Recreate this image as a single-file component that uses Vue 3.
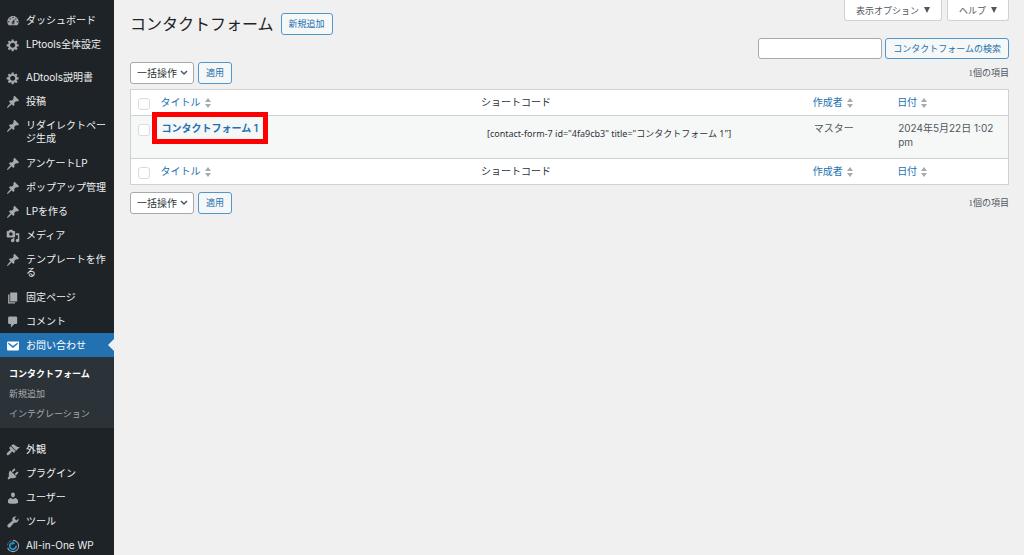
<script setup>
import { ref } from 'vue'

const icons = {
  dashboard: 'M3.76 16h12.48c1.1-1.37 1.76-3.11 1.76-5 0-4.42-3.58-8-8-8s-8 3.58-8 8c0 1.89.66 3.63 1.76 5zM10 4c.55 0 1 .45 1 1s-.45 1-1 1-1-.45-1-1 .45-1 1-1zM6 6c.55 0 1 .45 1 1s-.45 1-1 1-1-.45-1-1 .45-1 1-1zm8 0c.55 0 1 .45 1 1s-.45 1-1 1-1-.45-1-1 .45-1 1-1zm-5.37 5.55L12 7v6c0 1.1-.9 2-2 2s-2-.9-2-2c0-.57.24-1.08.63-1.45zM4 10c.55 0 1 .45 1 1s-.45 1-1 1-1-.45-1-1 .45-1 1-1zm12 0c.55 0 1 .45 1 1s-.45 1-1 1-1-.45-1-1 .45-1 1-1zm-5 3c0-.55-.45-1-1-1s-1 .45-1 1 .45 1 1 1 1-.45 1-1z',
  gear: 'M18 12h-2.18c-.17.7-.44 1.35-.81 1.93l1.54 1.54-2.1 2.1-1.54-1.54c-.58.36-1.23.63-1.91.79V19H8v-2.18c-.68-.16-1.33-.43-1.91-.79l-1.54 1.54-2.12-2.12 1.54-1.54c-.36-.58-.63-1.23-.79-1.91H1V9.03h2.17c.16-.7.44-1.35.8-1.94L2.43 5.55l2.1-2.1 1.54 1.54c.58-.37 1.24-.64 1.93-.81V2h3v2.18c.68.16 1.33.43 1.91.79l1.54-1.54 2.12 2.12-1.54 1.54c.36.59.64 1.24.8 1.94H18V12zm-8.5 2.1c2 0 3.6-1.6 3.6-3.6s-1.6-3.6-3.6-3.6-3.600 1.6-3.600 3.600 1.600 3.600 3.600 3.600z',
  pin: 'M10.44 3.02l1.82-1.82 6.36 6.35-1.83 1.82c-1.05-.68-2.48-.57-3.41.36l-.75.75c-.92.93-1.04 2.35-.35 3.41l-1.83 1.82-2.41-2.41-2.8 2.79c-.42.42-3.38 2.71-3.8 2.29s1.86-3.39 2.28-3.81l2.79-2.79L4.1 9.36l1.83-1.82c1.05.69 2.48.57 3.4-.36l.75-.75c.93-.92 1.05-2.35.36-3.41z',
  media: 'M13 11V4c0-.55-.45-1-1-1h-1.67L9 1H5L3.67 3H2c-.55 0-1 .45-1 1v7c0 .55.45 1 1 1h10c.55 0 1-.45 1-1zM7 4.5c1.38 0 2.5 1.12 2.5 2.5S8.38 9.5 7 9.5 4.5 8.38 4.5 7 5.62 4.5 7 4.5zM14 6h5v10.5c0 1.38-1.12 2.5-2.5 2.5S14 17.88 14 16.5s1.12-2.5 2.5-2.5c.17 0 .34.02.5.05V9h-3V6zm-4 8.05V13h2v3.5c0 1.38-1.12 2.5-2.5 2.5S7 17.88 7 16.5 8.12 14 9.5 14c.17 0 .34.02.5.05z',
  page: 'M6 15V2h10v13H6zm-1 1h8v2H3V5h2v11z',
  comment: 'M5 2h9c1.1 0 2 .9 2 2v7c0 1.1-.9 2-2 2h-2l-5 5v-5H5c-1.1 0-2-.9-2-2V4c0-1.1.9-2 2-2z',
  mail: 'M3.5 3.5h13A1.5 1.5 0 0 1 18.5 5v10a1.5 1.5 0 0 1-1.5 1.5H3A1.500 1.500 0 0 1 1.500 15V5A1.500 1.500 0 0 1 3 3.500zM3.800 5.400L2.800 6.700l7.200 6.300 7.200-6.300-1-1.300L10 9.900z',
  brush: 'M14.48 11.06L7.41 3.99l1.5-1.5c.5-.56 2.3-.47 3.51.32 1.21.8 1.43 1.28 2.91 2.1 1.18.64 2.45 1.26 4.45.85zm-.71.71L6.7 4.7 4.93 6.47c-.39.39-.39 1.02 0 1.41l1.06 1.06c.39.39.39 1.03 0 1.42-.6.6-1.43 1.11-2.21 1.69-.35.26-.7.53-1.01.84C1.43 14.23.4 16.08 1.4 17.07c.99 1 2.84-.03 4.18-1.36.31-.31.58-.66.85-1.02.57-.78 1.08-1.61 1.69-2.21.39-.39 1.02-.39 1.41 0l1.06 1.06c.39.39 1.02.39 1.41 0z',
  plug: 'M13.11 4.36L9.87 7.6 8 5.73l3.24-3.24c.35-.34 1.05-.2 1.56.32.52.51.66 1.21.31 1.55zm-8 1.77l.91-1.12 9.01 9.01-1.19.84c-.71.71-2.63 1.16-3.82 1.16H6.14L4.9 17.26c-.59.59-1.54.59-2.12 0-.59-.58-.59-1.53 0-2.12l1.24-1.24v-3.88c0-1.13.4-3.19 1.09-3.89zm7.26 3.97l3.24-3.24c.34-.35 1.04-.21 1.55.31.52.51.66 1.21.31 1.55l-3.24 3.25z',
  user: 'M10 9.25c-2.27 0-2.73-3.44-2.73-3.44C7 4.02 7.82 2 9.97 2c2.16 0 2.98 2.02 2.71 3.81 0 0-.41 3.44-2.68 3.44zm0 2.57L12.72 10c2.39 0 4.52 2.33 4.52 4.53v2.49s-3.65 1.13-7.24 1.13c-3.65 0-7.24-1.13-7.24-1.13v-2.49c0-2.25 1.94-4.48 4.47-4.48z',
  wrench: 'M16.68 9.77c-1.34 1.34-3.3 1.67-4.95.99l-5.41 6.52c-.99.99-2.59.99-3.58 0s-.99-2.59 0-3.57l6.52-5.42c-.68-1.65-.35-3.61.99-4.95 1.28-1.28 3.12-1.62 4.72-1.06l-2.89 2.89 2.82 2.82 2.86-2.87c.53 1.58.18 3.39-1.08 4.65z',
}

const groups = [
  [
    { icon: 'dashboard', label: 'ダッシュボード' },
    { icon: 'gear', label: 'LPtools全体設定' },
  ],
  [
    { icon: 'gear', label: 'ADtools説明書' },
    { icon: 'pin', label: '投稿' },
    { icon: 'pin', label: 'リダイレクトページ生成', wrapped: true },
    { icon: 'pin', label: 'アンケートLP' },
    { icon: 'pin', label: 'ポップアップ管理' },
    { icon: 'pin', label: 'LPを作る' },
    { icon: 'media', label: 'メディア' },
    { icon: 'pin', label: 'テンプレートを作る', wrapped: true },
    { icon: 'page', label: '固定ページ' },
    { icon: 'comment', label: 'コメント' },
    {
      icon: 'mail',
      label: 'お問い合わせ',
      current: true,
      children: ['コンタクトフォーム', '新規追加', 'インテグレーション'],
    },
  ],
  [
    { icon: 'brush', label: '外観' },
    { icon: 'plug', label: 'プラグイン' },
    { icon: 'user', label: 'ユーザー' },
    { icon: 'wrench', label: 'ツール' },
    { icon: 'migration', label: 'All-in-One WP' },
  ],
]

const columns = [
  { key: 'title', label: 'タイトル', sortable: true },
  { key: 'shortcode', label: 'ショートコード', sortable: false },
  { key: 'author', label: '作成者', sortable: true },
  { key: 'date', label: '日付', sortable: true },
]

const search = ref('')
const shortcode = '[contact-form-7 id="4fa9cb3" title="コンタクトフォーム 1"]'
</script>

<template>
  <div class="admin">
    <nav class="sidebar" aria-label="メインメニュー">
      <ul v-for="(group, g) in groups" :key="g" class="menu">
        <li v-for="item in group" :key="item.label" :class="{ wrapped: item.wrapped, current: item.current }">
          <a href="#" class="menu-link">
            <svg v-if="item.icon === 'migration'" class="icon" viewBox="0 0 20 20" aria-hidden="true">
              <path d="M10 2a8 8 0 1 1-7.6 10.5" fill="none" stroke="#a7aaad" stroke-width="1.6" />
              <path d="M2.2 9A8 8 0 0 1 7.5 2.4" fill="none" stroke="#8c8f94" stroke-width="1.4" stroke-dasharray="1.5 1" />
              <path d="M14.3 9.5a4.5 4.5 0 1 1-4.8-3.8" fill="none" stroke="#1d94d2" stroke-width="2.6" />
              <path d="M9 2.8l4.2 3.1L9 8.6z" fill="#1d94d2" />
            </svg>
            <svg v-else class="icon" viewBox="0 0 20 20" aria-hidden="true">
              <path :d="icons[item.icon]" fill="currentColor" fill-rule="evenodd" />
            </svg>
            <span class="menu-label">{{ item.label }}</span>
          </a>
          <ul v-if="item.children" class="submenu">
            <li v-for="(child, c) in item.children" :key="child">
              <a href="#" :class="{ active: c === 0 }">{{ child }}</a>
            </li>
          </ul>
        </li>
      </ul>
    </nav>

    <main class="content">
      <header class="top">
        <div class="heading">
          <h1>コンタクトフォーム</h1>
          <a href="#" class="button">新規追加</a>
        </div>
        <div class="screen-tabs">
          <button type="button">表示オプション<svg viewBox="0 0 6 6" aria-hidden="true"><path d="M0 0h6L3 6z" /></svg></button>
          <button type="button">ヘルプ<svg viewBox="0 0 6 6" aria-hidden="true"><path d="M0 0h6L3 6z" /></svg></button>
        </div>
      </header>

      <form class="search" @submit.prevent>
        <input v-model="search" type="search" aria-label="コンタクトフォームの検索" />
        <button type="submit" class="button">コンタクトフォームの検索</button>
      </form>

      <div class="tablenav">
        <div class="bulk">
          <select aria-label="一括操作を選択"><option>一括操作</option></select>
          <button type="button" class="button">適用</button>
        </div>
        <span class="count">1個の項目</span>
      </div>

      <table>
        <colgroup>
          <col class="col-check" />
          <col class="col-title" />
          <col class="col-shortcode" />
          <col class="col-author" />
          <col class="col-date" />
        </colgroup>
        <thead>
          <tr>
            <td class="check"><input type="checkbox" aria-label="すべて選択" /></td>
            <th v-for="col in columns" :key="col.key" scope="col">
              <a v-if="col.sortable" href="#">{{ col.label }}<svg class="sort" viewBox="0 0 6 10" aria-hidden="true"><path d="M0 4l3-4 3 4zM0 6h6l-3 4z" /></svg></a>
              <template v-else>{{ col.label }}</template>
            </th>
          </tr>
        </thead>
        <tbody>
          <tr>
            <td class="check"><input type="checkbox" aria-label="コンタクトフォーム 1 を選択" /></td>
            <td><a href="#" class="row-title">コンタクトフォーム 1</a></td>
            <td><input class="shortcode" type="text" readonly :value="shortcode" aria-label="ショートコード" /></td>
            <td>マスター</td>
            <td>2024年5月22日 1:02 pm</td>
          </tr>
        </tbody>
        <tfoot>
          <tr>
            <td class="check"><input type="checkbox" aria-label="すべて選択" /></td>
            <th v-for="col in columns" :key="col.key" scope="col">
              <a v-if="col.sortable" href="#">{{ col.label }}<svg class="sort" viewBox="0 0 6 10" aria-hidden="true"><path d="M0 4l3-4 3 4zM0 6h6l-3 4z" /></svg></a>
              <template v-else>{{ col.label }}</template>
            </th>
          </tr>
        </tfoot>
      </table>

      <div class="tablenav bottom">
        <div class="bulk">
          <select aria-label="一括操作を選択"><option>一括操作</option></select>
          <button type="button" class="button">適用</button>
        </div>
        <span class="count">1個の項目</span>
      </div>
    </main>
  </div>
</template>

<style>
body {
  background: #f0f0f1;
}
</style>

<style scoped>
* {
  box-sizing: border-box;
}
.admin {
  display: flex;
  height: 100vh;
  overflow: hidden;
  font-family: Inter, "Noto Sans CJK JP", sans-serif;
  font-size: 10px;
  line-height: 13px;
  color: #50575e;
  background: #f0f0f1;
}
a {
  color: #2271b1;
  text-decoration: none;
}
ul {
  list-style: none;
  margin: 0;
  padding: 0;
}

.sidebar {
  flex: 0 0 114px;
  background: #1d2327;
  padding-top: 8px;
}
.menu + .menu {
  margin-top: 9px;
}
.menu-link {
  position: relative;
  display: flex;
  gap: 6px;
  padding: 6px 8px 5px 6px;
  color: #f0f0f1;
}
.icon {
  flex: none;
  width: 14px;
  height: 14px;
  color: #a7aaad;
}
.menu-link .icon {
  margin-bottom: -1px;
}
.menu-label {
  flex: 1;
  min-width: 0;
  word-break: break-all;
}
.wrapped .menu-link {
  padding-bottom: 6px;
}
.current > .menu-link {
  background: #2271b1;
  color: #fff;
}
.current .icon {
  color: #fff;
}
.current > .menu-link::after {
  content: "";
  position: absolute;
  right: 0;
  top: 6px;
  border: 6px solid transparent;
  border-right-color: #f0f0f1;
  border-left: 0;
}
.submenu {
  background: #2c3338;
  padding: 7px 0 4px;
}
.submenu a {
  display: block;
  padding: 3px 8px 4px 9px;
  color: #a7aaad;
  font-size: 9px;
}
.submenu a.active {
  color: #fff;
  font-weight: 600;
}

.content {
  flex: 1;
  min-width: 0;
  padding: 0 15px 0 16px;
}
.top {
  display: flex;
  justify-content: space-between;
  align-items: flex-start;
}
.heading {
  display: flex;
  align-items: center;
  gap: 7px;
  padding: 13px 0 3px;
}
h1 {
  margin: 0;
  font-size: 16px;
  font-weight: 400;
  line-height: 22px;
  color: #1d2327;
}
.button {
  display: inline-block;
  height: 22px;
  padding: 0 7px;
  border: 1px solid #5197cb;
  border-radius: 3px;
  background: #f6f7f7;
  color: #2271b1;
  font: inherit;
  font-size: 9px;
  line-height: 20px;
  white-space: nowrap;
}
.screen-tabs {
  display: flex;
  gap: 5px;
}
.screen-tabs button {
  display: flex;
  align-items: center;
  gap: 5px;
  height: 21px;
  padding: 0 11px;
  border: 1px solid #d0d1d3;
  border-top: 0;
  border-radius: 0 0 3px 3px;
  background: #fff;
  color: #50575e;
  font: inherit;
  font-size: 9px;
}
.screen-tabs svg {
  width: 6px;
  height: 6px;
  fill: #50575e;
}
.search {
  display: flex;
  justify-content: flex-end;
  gap: 3px;
}
.search input {
  width: 124px;
  height: 21px;
  padding: 0 6px;
  border: 1px solid #a7a9ac;
  border-radius: 3px;
  background: #fff;
  font: inherit;
}
.search .button {
  height: 21px;
  line-height: 19px;
}
.tablenav {
  display: flex;
  justify-content: space-between;
  align-items: center;
  margin: 3px 0 5px;
}
.tablenav.bottom {
  margin-top: 7px;
}
.bulk {
  display: flex;
  gap: 4px;
}
select {
  appearance: none;
  height: 22px;
  width: 64px;
  padding: 0 6px;
  border: 1px solid #a7a9ac;
  border-radius: 3px;
  color: #2c3338;
  font: inherit;
  background: #fff url("data:image/svg+xml,%3Csvg xmlns='http://www.w3.org/2000/svg' viewBox='0 0 8 6'%3E%3Cpath d='M1 1l3 3 3-3' fill='none' stroke='%2350575e' stroke-width='1.5'/%3E%3C/svg%3E") no-repeat right 5px center / 8px 6px;
}
.count {
  font-family: "Liberation Serif", "Noto Sans CJK JP", serif;
  font-size: 9px;
}

table {
  width: 100%;
  table-layout: fixed;
  border-collapse: collapse;
  border: 1px solid #d0d1d3;
  background: #fff;
}
.col-check { width: 24px; }
.col-title { width: 36.5%; }
.col-shortcode { width: 37.8%; }
.col-author { width: 9.6%; }
td,
th {
  padding: 5px 7px;
  text-align: left;
  vertical-align: top;
}
th {
  padding: 6px;
  font-family: "Liberation Serif", "Noto Sans CJK JP", serif;
  font-weight: 400;
  color: #2c3338;
}
th a {
  display: flex;
  align-items: center;
  gap: 4px;
}
.sort {
  width: 6px;
  height: 10px;
  fill: #a7aaad;
}
tbody tr {
  background: #f6f7f7;
  border-top: 1px solid #d0d1d3;
  border-bottom: 1px solid #d0d1d3;
}
tbody td {
  height: 43px;
  line-height: 14px;
}
.check {
  padding: 8px 0 0 7px;
}
.check input {
  appearance: none;
  display: block;
  width: 12px;
  height: 12px;
  margin: 0;
  border: 1px solid #dcdcde;
  border-radius: 3px;
  background: #fff;
}
.row-title {
  font-weight: 600;
  outline: 5px solid #f00;
  outline-offset: 5px;
}
.shortcode {
  display: block;
  width: 100%;
  height: 24px;
  padding: 0 5px;
  border: 0;
  background: transparent;
  color: #2c3338;
  font-family: "Noto Sans", "Noto Sans CJK JP", sans-serif;
  font-size: 9px;
}
</style>
